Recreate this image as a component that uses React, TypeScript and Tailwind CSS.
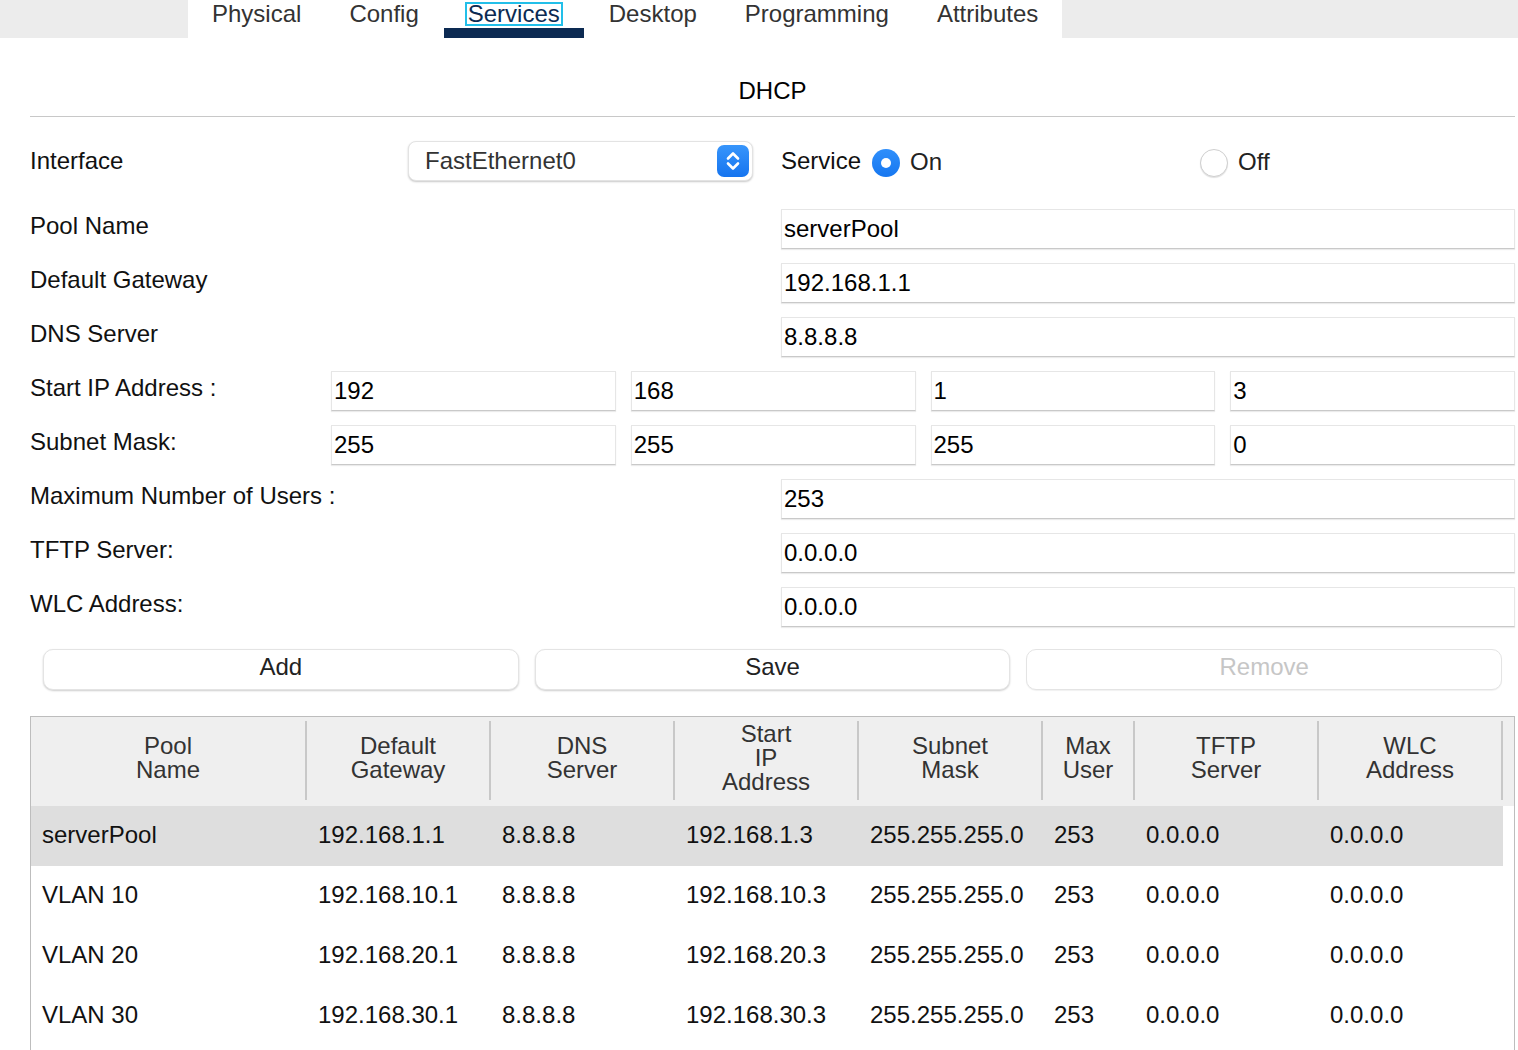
import React from "react";

const FONT = { fontFamily: '"Liberation Sans", Arial, Helvetica, sans-serif' };

function Field({ value }: { value: string }) {
  return (
    <div className="h-[40px] bg-white border border-[#e6e6e6] border-b-[#c9c9c9] shadow-[0_1px_1px_rgba(0,0,0,0.08)] flex items-center pl-[2px] text-black">
      {value}
    </div>
  );
}

function Row({ label, value }: { label: string; value: string }) {
  return (
    <div className="flex items-start">
      <div className="w-[751px] pt-[3px] leading-[28px] text-[#111]">{label}</div>
      <div className="flex-1">
        <Field value={value} />
      </div>
    </div>
  );
}

function QuadRow({ label, values }: { label: string; values: string[] }) {
  return (
    <div className="flex items-start">
      <div className="w-[301px] pt-[3px] leading-[28px] text-[#111]">{label}</div>
      <div className="flex-1 grid grid-cols-4 gap-[15px]">
        {values.map((v, i) => (
          <Field key={i} value={v} />
        ))}
      </div>
    </div>
  );
}

const tabs = ["Physical", "Config", "Services", "Desktop", "Programming", "Attributes"];

const cols: { w: string; label: string[] }[] = [
  { w: "w-[276px]", label: ["Pool", "Name"] },
  { w: "w-[184px]", label: ["Default", "Gateway"] },
  { w: "w-[184px]", label: ["DNS", "Server"] },
  { w: "w-[184px]", label: ["Start", "IP", "Address"] },
  { w: "w-[184px]", label: ["Subnet", "Mask"] },
  { w: "w-[92px]", label: ["Max", "User"] },
  { w: "w-[184px]", label: ["TFTP", "Server"] },
  { w: "w-[184px]", label: ["WLC", "Address"] },
];

const rows = [
  ["serverPool", "192.168.1.1", "8.8.8.8", "192.168.1.3", "255.255.255.0", "253", "0.0.0.0", "0.0.0.0"],
  ["VLAN 10", "192.168.10.1", "8.8.8.8", "192.168.10.3", "255.255.255.0", "253", "0.0.0.0", "0.0.0.0"],
  ["VLAN 20", "192.168.20.1", "8.8.8.8", "192.168.20.3", "255.255.255.0", "253", "0.0.0.0", "0.0.0.0"],
  ["VLAN 30", "192.168.30.1", "8.8.8.8", "192.168.30.3", "255.255.255.0", "253", "0.0.0.0", "0.0.0.0"],
];

export default function App() {
  return (
    <div style={FONT} className="w-[1518px] h-[1050px] overflow-hidden bg-white text-[24px]">
      {/* Tab bar */}
      <div className="h-[38px] bg-[#ececec] flex">
        <div className="ml-[188px] bg-white flex h-[38px]">
          {tabs.map((t) => {
            const active = t === "Services";
            return (
              <div key={t} className="relative px-[24px] h-[38px] text-[24px]">
                <div className="h-[28px] leading-[28px]">
                  {active ? (
                    <span className="text-[#0c2a52] outline-2 outline-[#22bfe9] outline-offset-[0px] px-[1px] leading-[20px] inline-block">
                      {t}
                    </span>
                  ) : (
                    <span className="text-[#333]">{t}</span>
                  )}
                </div>
                {active && <div className="absolute left-[1px] right-[1px] bottom-0 h-[10px] bg-[#0c2a52]" />}
              </div>
            );
          })}
        </div>
      </div>

      <div className="pl-[30px] pr-[3px]">
        {/* DHCP title */}
        <div className="pt-[39px] pb-[11px] h-[78px] text-center leading-[28px] text-black">DHCP</div>
        <div className="h-px bg-[#c8c8c8]" />

        {/* Interface row */}
        <div className="mt-[24px] flex items-center h-[40px]">
          <div className="w-[378px] text-[#111]">Interface</div>
          <div className="w-[345px] h-[40px] rounded-[8px] bg-white border border-[#e3e3e3] shadow-[0_1px_2px_rgba(0,0,0,0.22)] flex items-center pl-[16px] pr-[3px] text-[#333]">
            <span className="flex-1">FastEthernet0</span>
            <div className="w-[32px] h-[32px] rounded-[7px] bg-gradient-to-b from-[#3795fb] to-[#1574ef] flex items-center justify-center">
              <svg width="32" height="32" viewBox="0 0 32 32" fill="none">
                <path d="M11 13.5 L16 8.5 L21 13.5" stroke="white" strokeWidth="2.6" strokeLinecap="round" strokeLinejoin="round" />
                <path d="M11 18.5 L16 23.5 L21 18.5" stroke="white" strokeWidth="2.6" strokeLinecap="round" strokeLinejoin="round" />
              </svg>
            </div>
          </div>
          <div className="ml-[28px] text-[#111] w-[91px]">Service</div>
          <div className="w-[28px] h-[28px] rounded-full bg-gradient-to-b from-[#2f8ffb] to-[#1677f0] flex items-center justify-center mt-[4px]">
            <div className="w-[10px] h-[10px] rounded-full bg-white" />
          </div>
          <div className="ml-[10px] text-[#222] mt-[2px] w-[290px]">On</div>
          <div className="w-[28px] h-[28px] rounded-full bg-white border border-[#cfcfcf] shadow-[0_1px_1px_rgba(0,0,0,0.12)] mt-[4px]" />
          <div className="ml-[10px] text-[#222] mt-[2px]">Off</div>
        </div>

        {/* Fields */}
        <div className="mt-[28px] flex flex-col gap-[14px]">
          <Row label="Pool Name" value="serverPool" />
          <Row label="Default Gateway" value="192.168.1.1" />
          <Row label="DNS Server" value="8.8.8.8" />
          <QuadRow label="Start IP Address :" values={["192", "168", "1", "3"]} />
          <QuadRow label="Subnet Mask:" values={["255", "255", "255", "0"]} />
          <Row label="Maximum Number of Users :" value="253" />
          <Row label="TFTP Server:" value="0.0.0.0" />
          <Row label="WLC Address:" value="0.0.0.0" />
        </div>

        {/* Buttons */}
        <div className="mt-[22px] ml-[13px] mr-[13px] grid grid-cols-3 gap-[16px]">
          {[
            { t: "Add", c: "text-[#222]" },
            { t: "Save", c: "text-[#222]" },
            { t: "Remove", c: "text-[#c6c6c6]" },
          ].map((b) => (
            <div
              key={b.t}
              className={
                "h-[41px] rounded-[10px] bg-white border border-[#e4e4e4] flex items-center justify-center pb-[6px] " +
                (b.t === "Remove" ? "shadow-[0_1px_1px_rgba(0,0,0,0.06)] " : "shadow-[0_1px_2px_rgba(0,0,0,0.2)] ") +
                b.c
              }
            >
              {b.t}
            </div>
          ))}
        </div>
      </div>

      {/* Table */}
      <div className="mt-[26px] ml-[30px] w-[1485px] h-[400px] border-l border-t border-r border-[#bdbdbd]">
        <div className="bg-[#efefef] flex h-[89px]">
          {cols.map((c, i) => (
            <div key={i} className={c.w + " h-[89px] pt-[4px] pb-[6px]"}>
              <div className="h-full border-r-2 border-[#c8c8c8] flex flex-col items-center justify-center text-[#333] leading-[24px] text-center pb-[6px]">
                {c.label.map((l, j) => (
                  <div key={j}>{l}</div>
                ))}
              </div>
            </div>
          ))}
        </div>
        {rows.map((r, ri) => (
          <div key={ri} className={"flex h-[60px] items-center w-[1472px] text-[#111] " + (ri === 0 ? "bg-[#dedede]" : "")}>
            {r.map((v, ci) => (
              <div key={ci} className={cols[ci].w + " pl-[11px] whitespace-nowrap pb-[2px]"}>
                {v}
              </div>
            ))}
          </div>
        ))}
      </div>
    </div>
  );
}
